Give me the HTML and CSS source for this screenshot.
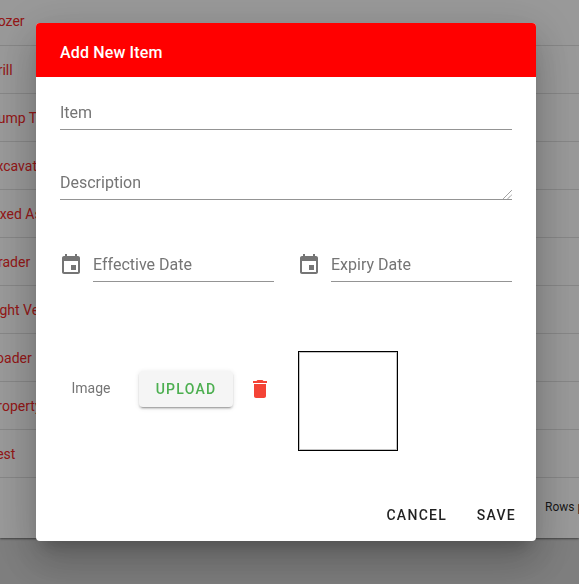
FILE: index.html
```html
<!DOCTYPE html>
<html lang="en">
<head>
<meta charset="utf-8">
<title>Add New Item</title>
<link rel="stylesheet" href="styles.css">
</head>
<body>
<div class="page">
  <div class="table">
    <div class="row"><span class="cell">Dozer</span></div>
    <div class="row"><span class="cell">Drill</span></div>
    <div class="row"><span class="cell">Dump Truck</span></div>
    <div class="row"><span class="cell">Excavator</span></div>
    <div class="row"><span class="cell">Fixed Asset</span></div>
    <div class="row"><span class="cell">Grader</span></div>
    <div class="row"><span class="cell">Light Vehicle</span></div>
    <div class="row"><span class="cell">Loader</span></div>
    <div class="row"><span class="cell">Property</span></div>
    <div class="row"><span class="cell">Test</span></div>
    <div class="table-footer"><span class="rows-label">Rows per page:</span></div>
  </div>
</div>
<div class="backdrop"></div>
<div class="dialog">
  <header class="dialog-title">Add New Item</header>
  <div class="dialog-body">
    <div class="field field-item"><span class="placeholder">Item</span></div>
    <div class="field field-desc">
      <span class="placeholder">Description</span>
      <svg class="resizer" width="9" height="9" viewBox="0 0 9 9"><path d="M0.5 8.5L8.5 0.5M5 8.5L8.5 5" stroke="#555" stroke-width="1" fill="none" stroke-dasharray="1 0.5"/></svg>
    </div>
    <div class="date-row">
      <div class="date-col">
        <svg class="cal" width="24" height="24" viewBox="0 0 24 24"><path fill="#757575" d="M17 12h-5v5h5v-5zM16 1v2H8V1H6v2H5c-1.11 0-1.99.9-1.99 2L3 19c0 1.1.89 2 2 2h14c1.1 0 2-.9 2-2V5c0-1.1-.9-2-2-2h-1V1h-2zm3 18H5V8h14v11z"/></svg>
        <div class="field date-field"><span class="placeholder">Effective Date</span></div>
      </div>
      <div class="date-col">
        <svg class="cal" width="24" height="24" viewBox="0 0 24 24"><path fill="#757575" d="M17 12h-5v5h5v-5zM16 1v2H8V1H6v2H5c-1.11 0-1.99.9-1.99 2L3 19c0 1.1.89 2 2 2h14c1.1 0 2-.9 2-2V5c0-1.1-.9-2-2-2h-1V1h-2zm3 18H5V8h14v11z"/></svg>
        <div class="field date-field"><span class="placeholder">Expiry Date</span></div>
      </div>
    </div>
    <div class="image-row">
      <span class="image-label">Image</span>
      <button class="upload" type="button">Upload</button>
      <svg class="trash" width="24" height="24" viewBox="0 0 24 24"><path fill="#f44336" d="M6 19c0 1.1.9 2 2 2h8c1.1 0 2-.9 2-2V7H6v12zM19 4h-3.5l-1-1h-5l-1 1H5v2h14V4z"/></svg>
      <div class="preview"></div>
    </div>
  </div>
  <footer class="dialog-actions">
    <button class="action" type="button">Cancel</button>
    <button class="action" type="button">Save</button>
  </footer>
</div>
</body>
</html>
```
FILE: styles.css
```css
* { box-sizing: border-box; }
html, body { margin: 0; height: 100%; }
body {
  background: #d2d2d2;
  font-family: Roboto, "Liberation Sans", sans-serif;
  overflow: hidden;
}
.page { height: 584px; overflow: hidden; }
.table {
  background: #fff;
  height: 538px;
  box-shadow: 0 1px 2px rgba(0,0,0,.5);
}
.row {
  height: 48px;
  border-bottom: 1px solid #e0e0e0;
  display: flex;
  align-items: center;
  color: #f52828;
  font-size: 14px;
}
.row:first-child { height: 46px; padding-bottom: 3px; }
.cell { margin-left: -11.5px; white-space: nowrap; }
.table-footer {
  height: 58px;
  display: flex;
  align-items: center;
  padding-left: 545px;
  white-space: nowrap;
  font-size: 12px;
  color: rgba(0,0,0,.87);
}
.backdrop {
  position: fixed;
  inset: 0;
  background: rgba(0,0,0,.4);
}
.dialog {
  position: fixed;
  left: 36px;
  top: 23px;
  width: 500px;
  height: 518px;
  background: #fff;
  border-radius: 4px;
  overflow: hidden;
  display: flex;
  flex-direction: column;
  box-shadow: 0 11px 15px -7px rgba(0,0,0,.2), 0 24px 38px 3px rgba(0,0,0,.14), 0 9px 46px 8px rgba(0,0,0,.12);
}
.dialog-title {
  height: 54px;
  background: #f00;
  color: #fff;
  font-size: 16px;
  font-weight: 500;
  letter-spacing: .15px;
  padding: 4px 24px 0;
  display: flex;
  align-items: center;
  flex: none;
}
.dialog-body {
  flex: 1;
  padding: 0 24px;
  display: flex;
  flex-direction: column;
}
.field {
  border-bottom: 1px solid #949494;
  color: #757575;
  font-size: 16px;
  display: flex;
  align-items: center;
  height: 32px;
  padding-bottom: 2px;
  position: relative;
}
.field-item { margin-top: 21px; width: 452px; }
.field-desc { margin-top: 38px; width: 452px; }
.resizer { position: absolute; right: 0; bottom: 0; }
.placeholder { display: block; }
.date-row {
  display: flex;
  margin-top: 50px;
  gap: 24px;
  align-items: flex-end;
  width: 452px;
}
.date-col { display: flex; align-items: center; flex: 1; gap: 10px; }
.cal { margin: 0 0 2px -1px; flex: none; }
.date-field { flex: 1; }
.image-row {
  display: flex;
  align-items: flex-start;
  margin-top: 69px;
}
.image-label {
  margin-left: 11.5px;
  margin-top: 29px;
  font-size: 14px;
  color: #757575;
  width: 67.5px;
}
.upload {
  margin-top: 20px;
  width: 94px;
  height: 36px;
  border: 0;
  border-radius: 4px;
  background: #f5f5f5;
  color: #4caf50;
  font: 500 14px Roboto, "Liberation Sans", sans-serif;
  letter-spacing: 1.25px;
  text-transform: uppercase;
  box-shadow: 0 3px 1px -2px rgba(0,0,0,.2), 0 2px 2px 0 rgba(0,0,0,.14), 0 1px 5px 0 rgba(0,0,0,.12);
}
.trash { margin: 26px 0 0 15px; flex: none; }
.preview {
  margin-left: 26px;
  width: 100px;
  height: 100px;
  border: 1px solid #000;
  box-shadow: inset 0 0 0 1px #c4c4c4;
  flex: none;
}
.dialog-actions {
  flex: none;
  height: 34px;
  display: flex;
  justify-content: flex-end;
  gap: 29.5px;
  padding: 0 20px 0 0;
  align-items: flex-start;
}
.action {
  border: 0;
  padding: 0;
  background: none;
  color: rgba(0,0,0,.87);
  font: 500 14px Roboto, "Liberation Sans", sans-serif;
  letter-spacing: 1.3px;
  text-transform: uppercase;
}
```
